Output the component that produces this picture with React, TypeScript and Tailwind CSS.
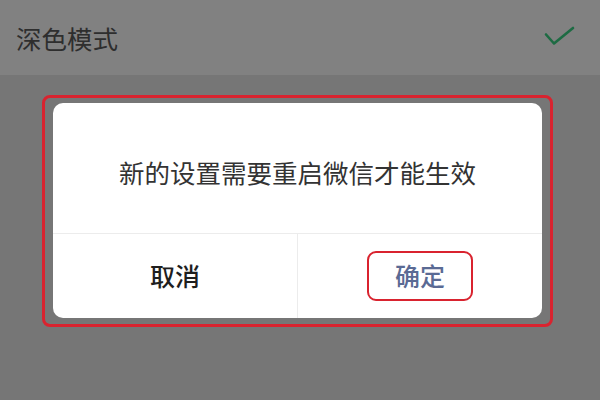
export default function App() {
  const font = { fontFamily: '"Noto Sans CJK SC", "Noto Sans", sans-serif' };
  return (
    <div className="w-[600px] h-[400px] bg-[#767676] flex flex-col overflow-hidden" style={font}>
      <div className="h-[75px] bg-[#818181] flex items-center justify-between pl-[16px] pr-[24px]">
        <span className="text-[25.5px] text-[#2e2e2e] leading-none">深色模式</span>
        <svg width="32" height="22" viewBox="0 0 32 22" className="mt-[-2px]">
          <path d="M2 8.5 L10 17.5 L29 2" fill="none" stroke="#1d6b43" strokeWidth="2.6" strokeLinecap="round" strokeLinejoin="round" />
        </svg>
      </div>
      <div className="pt-[20px] pl-[42px]">
        <div className="w-[511px] h-[232px] border-[3px] border-[#d9232f] rounded-[8px] pt-[5px] pl-[8px]">
          <div className="w-[489px] h-[215px] bg-white rounded-[10px] flex flex-col">
            <div className="h-[131px] flex items-center justify-center border-b border-[#ececec]">
              <span className="text-[25.5px] text-[#333333] mt-[8px]">新的设置需要重启微信才能生效</span>
            </div>
            <div className="flex-1 flex">
              <div className="w-[245px] border-r border-[#ececec] flex items-center justify-center">
                <span className="text-[25px] font-medium text-[#1e1e1e]">取消</span>
              </div>
              <div className="flex-1 flex items-center justify-center">
                <div className="w-[106px] h-[50px] border-2 border-[#d9232f] rounded-[9px] flex items-center justify-center">
                  <span className="text-[25px] font-medium text-[#5a6a94]">确定</span>
                </div>
              </div>
            </div>
          </div>
        </div>
      </div>
    </div>
  );
}
